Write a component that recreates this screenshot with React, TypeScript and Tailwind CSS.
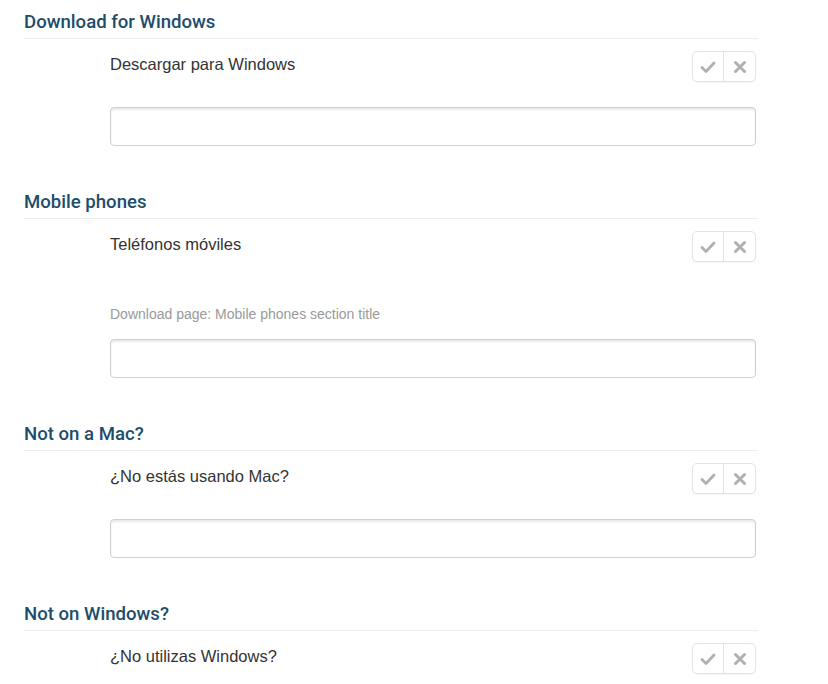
import React from "react";

type Item = { title: string; label: string; desc?: string; input?: boolean };

const items: Item[] = [
  { title: "Download for Windows", label: "Descargar para Windows", input: true },
  { title: "Mobile phones", label: "Teléfonos móviles", desc: "Download page: Mobile phones section title", input: true },
  { title: "Not on a Mac?", label: "¿No estás usando Mac?", input: true },
  { title: "Not on Windows?", label: "¿No utilizas Windows?", input: true },
];

function Check() {
  return (
    <svg width="18" height="18" viewBox="0 0 18 18">
      <path d="M3 9.5 L7 13.5 L15 5" fill="none" stroke="#b0b0b0" strokeWidth="2.8" strokeLinecap="round" strokeLinejoin="round" />
    </svg>
  );
}

function Cross() {
  return (
    <svg width="16" height="16" viewBox="0 0 16 16">
      <path d="M3.5 3.5 L12.5 12.5 M12.5 3.5 L3.5 12.5" fill="none" stroke="#b0b0b0" strokeWidth="3" strokeLinecap="round" />
    </svg>
  );
}

function Section({ item }: { item: Item }) {
  return (
    <div className="flex flex-col">
      <div
        className="border-b border-[#eeeeee] pt-[1px] pb-[4px] text-[18.6px] leading-[24px] font-medium text-[#1e4d6b]"
        style={{ fontFamily: 'Roboto, "Liberation Sans", Arial, sans-serif' }}
      >
        {item.title}
      </div>
      <div className="flex items-start pl-[86px] mt-[12px] pr-[2px]">
        <div className="flex-1 pt-[1px] text-[16.5px] leading-[24px] text-[#333333]">{item.label}</div>
        <div className="flex h-[31px] w-[64px] rounded-[5px] border border-[#e3e3e3] bg-white shadow-[0_1px_1px_rgba(0,0,0,0.04)]">
          <div className="flex w-1/2 items-center justify-center border-r border-[#e3e3e3]">
            <Check />
          </div>
          <div className="flex w-1/2 items-center justify-center">
            <Cross />
          </div>
        </div>
      </div>
      {item.desc && (
        <div className="pl-[86px] mt-[43px] text-[14px] leading-[19px] text-[#9a9a9a]">{item.desc}</div>
      )}
      {item.input && (
        <div className={`pl-[86px] pr-[2px] ${item.desc ? "mt-[15px]" : "mt-[25px]"}`}>
          <div className="h-[39px] w-full rounded-[4px] border border-[#cfcfcf] bg-white shadow-[inset_0_2px_2px_rgba(0,0,0,0.09)]" />
        </div>
      )}
    </div>
  );
}

export default function App() {
  return (
    <div
      className="min-h-[684px] w-[828px] bg-white pt-[9px] pl-[24px]"
      style={{ fontFamily: '"Helvetica Neue", "Liberation Sans", Arial, sans-serif' }}
    >
      <div className="flex w-[734px] flex-col gap-[43px]">
        {items.map((it) => (
          <Section key={it.title} item={it} />
        ))}
      </div>
    </div>
  );
}
